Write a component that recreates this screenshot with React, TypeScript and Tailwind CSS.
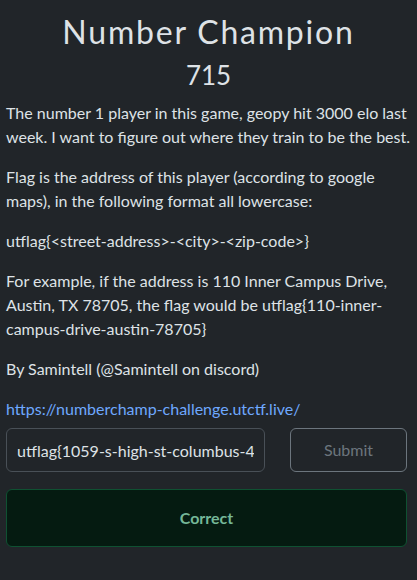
export default function App() {
  return (
    <main
      className="min-h-[580px] bg-[#212529] px-[6px] pt-[12px] text-[16px] leading-[24px] text-[#dee2e6]"
      style={{ fontFamily: "Lato, 'Noto Sans', sans-serif" }}
    >
      <h1 className="text-center text-[32px] font-normal leading-[40px] tracking-[1.8px] text-[#dee2e6]">
        Number Champion
      </h1>
      <h2 className="mt-[5px] text-center text-[26px] font-normal leading-[36px] text-[#dee2e6]">
        715
      </h2>

      <div className="mt-[8px]">
        <p className="mb-[16px]">
          The number 1 player in this game, geopy hit 3000 elo last week. I want to figure out where
          they train to be the best.
        </p>
        <p className="mb-[16px]">
          Flag is the address of this player (according to google maps), in the following format all
          lowercase:
        </p>
        <p className="mb-[16px]">utflag{"{<street-address>-<city>-<zip-code>}"}</p>
        <p className="mb-[16px]">
          For example, if the address is 110 Inner Campus Drive, Austin, TX 78705, the flag would be
          utflag{"{110-inner-campus-drive-austin-78705}"}
        </p>
        <p className="mb-[16px]">By Samintell (@Samintell on discord)</p>
        <p className="mb-[7px]">
          <a href="#" className="text-[#6ea8fe]">
            https://numberchamp-challenge.utctf.live/
          </a>
        </p>
      </div>

      <div className="mr-[4px]">
        <div className="flex gap-[25px]">
          <input
            readOnly
            value="utflag{1059-s-high-st-columbus-43206}"
            className="h-[44px] w-[259px] rounded-md border border-[#495057] bg-[#212529] px-[10px] text-[16px] text-[#dee2e6] outline-none"
            style={{ fontFamily: "Lato, 'Noto Sans', sans-serif" }}
          />
          <button
            disabled
            className="h-[44px] flex-1 rounded-md border border-[#6c757d] bg-transparent text-[16px] text-[#6c757d]"
            style={{ fontFamily: "Lato, 'Noto Sans', sans-serif" }}
          >
            Submit
          </button>
        </div>

        <div className="mt-[17px] flex h-[58px] items-center justify-center rounded-md border border-[#0f5132] bg-[#051b11] font-bold text-[#75b798]">
          Correct
        </div>
      </div>
    </main>
  );
}
